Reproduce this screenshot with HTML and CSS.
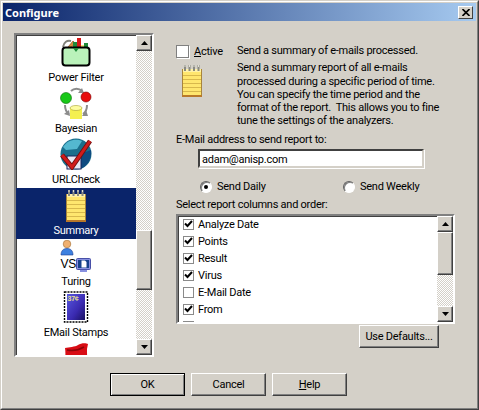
FILE: index.html
```html
<!DOCTYPE html>
<html lang="en">
<head>
<meta charset="utf-8">
<title>Configure</title>
<link rel="stylesheet" href="styles.css">
</head>
<body>
<svg class="defs" width="0" height="0" aria-hidden="true">
  <defs>
    <symbol id="notepad" viewBox="0 0 20 33">
      <rect x="0.5" y="5.5" width="19" height="27" fill="#ffe66e" stroke="#a8853c"/>
      <rect x="0" y="31" width="20" height="2" fill="#b8782a"/>
      <rect x="1" y="5" width="18" height="3" fill="#fff2a8"/>
      <path d="M1 11.5H19M1 15.5H19M1 19.5H19M1 23.5H19M1 27.5H19" stroke="#d8b84c" stroke-width="1"/>
      <path d="M3 1V7M7.500 1V7M12 1V7M16.500 1V7" stroke="#8a8a80" stroke-width="2"/>
      <path d="M3 1V3M7.500 1V3M12 1V3M16.500 1V3" stroke="#e0e0d8" stroke-width="1"/>
    </symbol>
    <symbol id="arrow-up" viewBox="0 0 7 4"><path d="M3.500 0L7 4H0Z" fill="#000"/></symbol>
    <symbol id="arrow-down" viewBox="0 0 7 4"><path d="M0 0H7L3.500 4Z" fill="#000"/></symbol>
    <symbol id="tick" viewBox="0 0 9 8"><path d="M1 3.500L3.500 6L8 1" fill="none" stroke="#000" stroke-width="2"/></symbol>
  </defs>
</svg>

<div class="window">
  <div class="window-inner">
    <header class="titlebar">
      <span class="title">Configure</span>
      <span class="close"><svg width="8" height="7" viewBox="0 0 8 7"><path d="M0.500 0L7.500 7M7.500 0L0.500 7" stroke="#000" stroke-width="1.600"/></svg></span>
    </header>

    <div class="main">
      <div class="sidebar">
        <div class="sidebar-list">
          <div class="nav-item">
            <svg class="nav-icon" viewBox="0 0 32 32">
              <path d="M3 11C4 6 7 4 11 5" fill="none" stroke="#808078" stroke-width="2"/>
              <path d="M8 11L13 5L15 7L11 12Z" fill="#d88a3c" stroke="#804010" stroke-width="0.600"/>
              <rect x="17" y="2" width="4" height="14" fill="#d81818"/>
              <rect x="13" y="6" width="4" height="8" fill="#1f8a3a"/>
              <rect x="24" y="7" width="4" height="7" fill="#1f8a3a"/>
              <rect x="21" y="9" width="3" height="9" fill="#f0e880"/>
              <rect x="2.500" y="11.500" width="27" height="18" rx="3" fill="#baf2ba" stroke="#000" stroke-width="2"/>
              <path d="M13 12H19L16 16Z" fill="#1f8a3a"/>
            </svg>
            <span class="nav-label">Power Filter</span>
          </div>
          <div class="nav-item">
            <svg class="nav-icon" viewBox="0 0 32 32">
              <path d="M11 4C14 1 19 1 22 4" fill="none" stroke="#8c8c8c" stroke-width="2"/>
              <path d="M22 1L24 6L18 6Z" fill="#8c8c8c"/>
              <path d="M5 18C5 22 6 25 9 27" fill="none" stroke="#8c8c8c" stroke-width="2"/>
              <path d="M9 23L10 29L4 27Z" fill="#8c8c8c"/>
              <path d="M27 18C27 22 26 25 23 27" fill="none" stroke="#8c8c8c" stroke-width="2"/>
              <path d="M22 29L28 29L26 23Z" fill="#8c8c8c"/>
              <circle cx="6" cy="11" r="5.500" fill="#18c818" stroke="#0c6c0c" stroke-width="0.600"/>
              <circle cx="26" cy="10" r="5" fill="#e80c0c" stroke="#700" stroke-width="0.600"/>
              <rect x="10" y="21" width="12" height="11" fill="#f4f050"/>
              <ellipse cx="16" cy="21" rx="6" ry="2.500" fill="#fdfca0" stroke="#a8a030" stroke-width="0.600"/>
            </svg>
            <span class="nav-label">Bayesian</span>
          </div>
          <div class="nav-item">
            <svg class="nav-icon" viewBox="0 0 32 32">
              <circle cx="16" cy="16" r="15.500" fill="#1b6f8c"/>
              <path d="M3 9C7 2 16 0 22 3L17 11L6 12Z" fill="#54b8d0"/>
              <path d="M20 16L31 12C32 20 28 28 20 31Z" fill="#0f4a80"/>
              <rect x="7" y="18" width="14" height="13" fill="#e8e8f4" stroke="#18245c"/>
              <path d="M2 17L12 29L30 3" fill="none" stroke="#701010" stroke-width="4.800"/>
              <path d="M2 17L12 29L30 3" fill="none" stroke="#d01c1c" stroke-width="3"/>
            </svg>
            <span class="nav-label">URLCheck</span>
          </div>
          <div class="nav-item is-selected">
            <svg class="nav-icon nav-note"><use href="#notepad"/></svg>
            <span class="nav-label">Summary</span>
          </div>
          <div class="nav-item">
            <svg class="nav-icon" viewBox="0 0 32 32">
              <circle cx="7" cy="4" r="3.800" fill="#f0b070" stroke="#a06c30" stroke-width="0.600"/>
              <path d="M1 15C1 11 3 8.500 7 8.500C11 8.500 13 11 13 15Z" fill="#3c80e0" stroke="#1c3c90" stroke-width="0.600"/>
              <text class="vs" x="0.500" y="28">VS</text>
              <rect x="16.500" y="18.500" width="14" height="11" rx="1" fill="#8890e0" stroke="#4850a8"/>
              <rect x="18" y="20" width="11" height="8" fill="#16408c"/>
              <path d="M21.500 20.500H25L26.500 22V27.500H21.500Z" fill="#fff"/>
              <rect x="20" y="30" width="7" height="2" fill="#8890e0"/>
            </svg>
            <span class="nav-label">Turing</span>
          </div>
          <div class="nav-item">
            <svg class="nav-icon" viewBox="0 0 32 32">
              <defs>
                <linearGradient id="stamp" x1="0" y1="0" x2="1" y2="1">
                  <stop offset="0" stop-color="#5858e0"/>
                  <stop offset="0.600" stop-color="#3a2ab0"/>
                  <stop offset="1" stop-color="#181060"/>
                </linearGradient>
              </defs>
              <rect x="4.500" y="1" width="23" height="30" fill="#fff" stroke="#000" stroke-width="1.400" stroke-dasharray="2 1"/>
              <rect x="7" y="3" width="18" height="26" fill="url(#stamp)"/>
              <text class="stamp-value" x="7.500" y="9.500">37¢</text>
            </svg>
            <span class="nav-label">EMail Stamps</span>
          </div>
          <div class="nav-item">
            <svg class="nav-icon" viewBox="0 0 32 32">
              <path d="M5 6C9 5 15 5 18 3C21 1 26 1 28 2L27 7C27 10 27 14 28 32H4C5 20 6 12 5 6Z" fill="#d80c14"/>
              <path d="M7 8C12 9 19 8 24 5" fill="none" stroke="#8c0408" stroke-width="1.500"/>
            </svg>
          </div>
        </div>
        <div class="scrollbar">
          <span class="scroll-btn"><svg width="7" height="4"><use href="#arrow-up"/></svg></span>
          <span class="scroll-track sidebar-before"></span>
          <span class="scroll-thumb sidebar-thumb"></span>
          <span class="scroll-track sidebar-after"></span>
          <span class="scroll-btn"><svg width="7" height="4"><use href="#arrow-down"/></svg></span>
        </div>
      </div>

      <section class="panel">
        <div class="intro">
          <div class="intro-side">
            <label class="active-row"><span class="checkbox"></span><span><u>A</u>ctive</span></label>
            <svg class="intro-note"><use href="#notepad"/></svg>
          </div>
          <div class="intro-text">
            <p class="lead">Send a summary of e-mails processed.</p>
            <p>Send a summary report of all e-mails<br>processed during a specific period of time.<br>You can specify the time period and the<br>format of the report.&nbsp; This allows you to fine<br>tune the settings of the analyzers.</p>
          </div>
        </div>

        <div class="field-label">E-Mail address to send report to:</div>
        <div class="email">adam@anisp.com</div>

        <div class="radios">
          <label class="radio-row radio-daily"><span class="radio is-on"></span>Send Daily</label>
          <label class="radio-row"><span class="radio"></span>Send Weekly</label>
        </div>

        <div class="field-label columns-label">Select report columns and order:</div>
        <div class="columns">
          <ul class="columns-list">
            <li><span class="mini-check"><svg width="9" height="8"><use href="#tick"/></svg></span>Analyze Date</li>
            <li><span class="mini-check"><svg width="9" height="8"><use href="#tick"/></svg></span>Points</li>
            <li><span class="mini-check"><svg width="9" height="8"><use href="#tick"/></svg></span>Result</li>
            <li><span class="mini-check"><svg width="9" height="8"><use href="#tick"/></svg></span>Virus</li>
            <li><span class="mini-check"></span>E-Mail Date</li>
            <li><span class="mini-check"><svg width="9" height="8"><use href="#tick"/></svg></span>From</li>
            <li><span class="mini-check"></span></li>
          </ul>
          <div class="scrollbar">
            <span class="scroll-btn"><svg width="7" height="4"><use href="#arrow-up"/></svg></span>
            <span class="scroll-thumb columns-thumb"></span>
            <span class="scroll-track columns-after"></span>
            <span class="scroll-btn"><svg width="7" height="4"><use href="#arrow-down"/></svg></span>
          </div>
        </div>
        <div class="defaults-row"><button class="btn btn-defaults" type="button">Use Defaults...</button></div>
      </section>
    </div>

    <footer class="footer">
      <button class="btn btn-primary" type="button">OK</button>
      <button class="btn" type="button">Cancel</button>
      <button class="btn" type="button"><u>H</u>elp</button>
    </footer>
  </div>
</div>
</body>
</html>
```

FILE: styles.css
```css
* { box-sizing: border-box; }

html, body {
  margin: 0;
  padding: 0;
  background: #d4d0c8;
}

body {
  width: 479px;
  height: 410px;
  overflow: hidden;
  font-family: Roboto, "Liberation Sans", Arial, sans-serif;
  font-size: 11px;
  line-height: 13px;
  letter-spacing: -0.250px;
  color: #000;
}

.defs { display: block; height: 0; }

.window {
  width: 479px;
  height: 410px;
  border: 1px solid;
  border-color: #d4d0c8 #404040 #404040 #d4d0c8;
}

.window-inner {
  height: 100%;
  padding: 1px;
  border: 1px solid;
  border-color: #fff #808080 #808080 #fff;
}

.titlebar {
  display: flex;
  align-items: center;
  justify-content: space-between;
  height: 18px;
  padding: 0 3px 0 2px;
  background: linear-gradient(90deg, #0a246a, #a6caf0);
}

.title {
  font-family: "Noto Sans", sans-serif;
  font-size: 11px;
  font-weight: 700;
  letter-spacing: 0;
  color: #fff;
}

.close {
  display: flex;
  align-items: center;
  justify-content: center;
  width: 15px;
  height: 13px;
  background: #d4d0c8;
  border: 1px solid;
  border-color: #fff #404040 #404040 #fff;
}

.main {
  display: flex;
  align-items: flex-start;
  padding: 12px 0 0 11px;
}

.sidebar {
  display: flex;
  width: 140px;
  height: 324px;
  border: 2px solid;
  border-color: #808080 #fff #fff #808080;
  box-shadow: inset 1px 1px 0 #404040;
  background: #fff;
}

.sidebar-list {
  flex: 1;
  min-width: 0;
  overflow: hidden;
}

.nav-item {
  display: flex;
  flex-direction: column;
  align-items: center;
  height: 51px;
  padding-top: 1px;
}

.nav-item.is-selected {
  background: #0a246a;
  color: #fff;
}

.nav-icon {
  display: block;
  width: 32px;
  height: 32px;
  flex: none;
}

.nav-note { width: 20px; height: 33px; }

.nav-label {
  margin-top: 3px;
  line-height: 14px;
  white-space: nowrap;
}

.nav-note + .nav-label { margin-top: 2px; }

.vs {
  font-family: "Liberation Sans", sans-serif;
  font-size: 12px;
  fill: #000;
}

.stamp-value {
  font-family: "Liberation Sans", sans-serif;
  font-size: 7px;
  font-weight: 700;
  fill: #e8e090;
}

.scrollbar {
  display: flex;
  flex-direction: column;
  width: 16px;
  flex: none;
}

.scroll-btn {
  display: flex;
  align-items: center;
  justify-content: center;
  height: 16px;
  flex: none;
  background: #d4d0c8;
  border: 1px solid;
  border-color: #fff #404040 #404040 #fff;
  box-shadow: inset -1px -1px 0 #808080;
}

.scroll-thumb {
  flex: none;
  background: #d4d0c8;
  border: 1px solid;
  border-color: #fff #404040 #404040 #fff;
  box-shadow: inset -1px -1px 0 #808080;
}

.scroll-track {
  flex: 1;
  background: repeating-conic-gradient(#d4d0c8 0 25%, #fff 0 50%) 0 0 / 2px 2px;
}

.sidebar-before { flex: none; height: 179px; }
.sidebar-thumb { height: 60px; }
.columns-thumb { height: 43px; }

.panel {
  width: 279px;
  margin-left: 22px;
  padding-top: 11px;
}

.intro { display: flex; }

.intro-side { width: 61px; flex: none; }

.active-row {
  display: flex;
  align-items: center;
  gap: 5px;
  height: 14px;
}

.checkbox {
  width: 13px;
  height: 13px;
  background: #fff;
  border: 1px solid;
  border-color: #404040 #fff #fff #404040;
  outline: 1px solid #808080;
  outline-offset: -1px;
  box-shadow: 1px 1px 0 #fff;
}

.intro-note {
  display: block;
  width: 20px;
  height: 33px;
  margin: 6px 0 0 6px;
}

.intro-text p {
  margin: 0;
  line-height: 13.250px;
  white-space: nowrap;
}

.intro-text .lead { margin-bottom: 4px; }

.field-label {
  margin-top: 5px;
  white-space: nowrap;
}

.email {
  width: 226px;
  height: 19px;
  margin: 3px 0 0 22px;
  padding: 2px 0 0 2px;
  background: #fff;
  border: 2px solid;
  border-color: #404040 #d4d0c8 #d4d0c8 #404040;
  box-shadow: 1px 1px 0 #fff;
}

.radios {
  display: flex;
  margin: 12px 0 0 24px;
}

.radio-row {
  display: flex;
  align-items: center;
  gap: 5px;
  height: 14px;
  white-space: nowrap;
}

.radio-daily { width: 143px; }

.radio {
  display: flex;
  align-items: center;
  justify-content: center;
  width: 12px;
  height: 12px;
  background: #fff;
  border-radius: 50%;
  border: 1px solid;
  border-color: #606060 #fff #fff #606060;
  box-shadow: inset 1px 1px 0 #808080;
}

.radio.is-on::after {
  content: "";
  width: 4px;
  height: 4px;
  border-radius: 50%;
  background: #000;
}

.columns-label { margin-top: 4px; }

.columns {
  display: flex;
  width: 279px;
  height: 110px;
  margin-top: 3px;
  background: #fff;
  border: 2px solid;
  border-color: #808080 #fff #fff #808080;
  box-shadow: inset 1px 1px 0 #404040;
}

.columns-list {
  flex: 1;
  min-width: 0;
  margin: 0;
  padding: 0;
  overflow: hidden;
  list-style: none;
}

.columns-list li {
  display: flex;
  align-items: center;
  gap: 4px;
  height: 17px;
  padding-left: 5px;
  white-space: nowrap;
}

.mini-check {
  display: flex;
  align-items: center;
  justify-content: center;
  width: 11px;
  height: 11px;
  flex: none;
  border: 1px solid #8a8a8a;
  background: #fff;
}

.defaults-row { padding: 1px 0 0 183px; }

.btn {
  display: block;
  width: 75px;
  height: 23px;
  margin: 0;
  padding: 0;
  font: inherit;
  letter-spacing: inherit;
  color: #000;
  background: #d4d0c8;
  border: 1px solid;
  border-color: #fff #404040 #404040 #fff;
  box-shadow: inset -1px -1px 0 #808080;
}

.btn-defaults { width: 80px; }

.btn-primary {
  border-color: #000;
  box-shadow: inset 1px 1px 0 #fff, inset -1px -1px 0 #808080;
}

.footer {
  display: flex;
  gap: 6px;
  margin-top: 16px;
  padding-left: 107px;
}
```
